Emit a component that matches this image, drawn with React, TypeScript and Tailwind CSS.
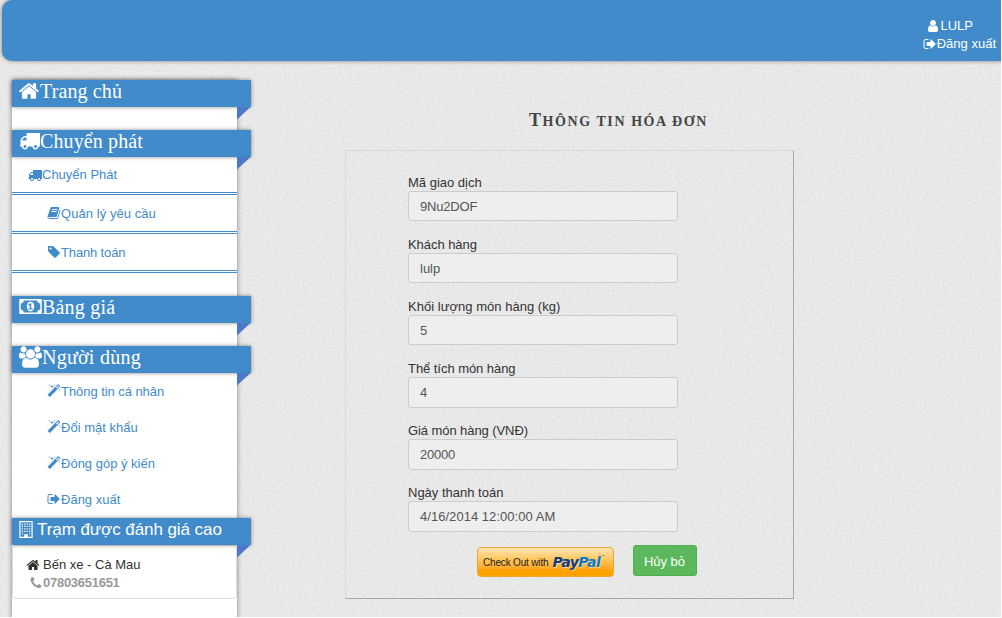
import React from 'react';

type IconProps = { d: string; w?: number; className?: string };

function Icon({ d, w = 1792, className = '' }: IconProps) {
  return (
    <svg viewBox={`0 0 ${w} 1792`} fill="currentColor" fillRule="evenodd" className={`shrink-0 ${className}`}>
      <path d={d} />
    </svg>
  );
}

const HOME =
  'M1472 992v480q0 26-19 45t-45 19h-384v-384h-256v384h-384q-26 0-45-19t-19-45v-480q0-1 .5-3t.5-3l575-474 575 474q1 2 1 6zm223-69l-62 74q-8 9-21 11h-3q-13 0-21-7l-692-577-692 577q-12 8-24 7-13-2-21-11l-62-74q-8-10-7-23.5t11-21.5l719-599q32-26 76-26t76 26l244 204v-195q0-14 9-23t23-9h192q14 0 23 9t9 23v408l219 182q10 8 11 21.5t-7 23.5z';
const TRUCK =
  'M640 1408q0-52-38-90t-90-38-90 38-38 90 38 90 90 38 90-38 38-90zm-384-512h384v-256h-158q-13 0-22 9l-195 195q-9 9-9 22v30zm1280 512q0-52-38-90t-90-38-90 38-38 90 38 90 90 38 90-38 38-90zm256-1088v1024q0 15-4 26.5t-13.5 18.5-16.5 11.5-23.5 6-22.5 2-25.5 0-22.5-.5q0 106-75 181t-181 75-181-75-75-181h-384q0 106-75 181t-181 75-181-75-75-181h-64q-3 0-22.5.5t-25.5 0-22.5-2-23.5-6-16.5-11.5-13.5-18.5-4-26.5q0-26 19-45t45-19v-320q0-8-.5-35t0-38 2.5-34.5 6.5-37 14-30.5 22.5-30l198-198q19-19 50.5-32t58.5-13h160v-192q0-26 19-45t45-19h1024q26 0 45 19t19 45z';
const TAG =
  'M576 448q0-53-37.5-90.5t-90.5-37.5-90.5 37.5-37.5 90.5 37.5 90.5 90.5 37.5 90.5-37.5 37.5-90.5zm1067 576q0 53-37 90l-491 492q-39 37-91 37-53 0-90-37l-715-716q-38-37-64.5-101t-26.5-117v-416q0-52 38-90t90-38h416q53 0 117 26.5t102 64.5l715 714q37 39 37 91z';
const BOOK =
  'M1703 478q40 57 18 129l-275 906q-19 64-76.5 107.5t-122.5 43.5h-923q-77 0-148.5-53.5t-99.5-131.5q-24-67-2-127 0-4 3-27t4-37q1-8-3-21.5t-3-19.5q2-11 8-21t16.5-23.5 16.5-23.5q23-38 45-91.5t30-91.5q3-10 .5-30t-.5-28q3-11 17-28t17-23q21-36 42-92t25-90q1-9-2.5-32t.5-28q4-13 22-30.5t22-22.5q19-26 42.5-84.5t27.5-96.5q1-8-3-25.5t-2-26.5q2-8 9-18t18-23 17-21q8-12 16.5-30.5t15-35 16-36 19.5-32 26.5-23.5 36-11.5 47.5 5.5l-1 3q38-9 51-9h761q74 0 114 56t18 130l-274 906q-36 119-71.5 153.5t-128.5 34.5h-869q-27 0-38 15-11 16-1 43 24 70 144 70h923q29 0 56-15.5t35-41.5l300-987q7-22 5-57 38 15 59 43zm-1064 2q-4 13 2 22.5t20 9.5h608q13 0 25.5-9.5t16.5-22.5l21-64q4-13-2-22.5t-20-9.5h-608q-13 0-25.5 9.5t-16.5 22.5zm-83 256q-4 13 2 22.5t20 9.5h608q13 0 25.5-9.5t16.5-22.5l21-64q4-13-2-22.5t-20-9.5h-608q-13 0-25.5 9.5t-16.5 22.5z';
const SIGN_OUT =
  'M704 1440q0 4 1 20t.5 26.5-3 23.5-10 19.5-20.5 6.5h-320q-119 0-203.5-84.5t-84.5-203.5v-704q0-119 84.5-203.5t203.5-84.5h320q13 0 22.5 9.5t9.5 22.5q0 4 1 20t.5 26.5-3 23.5-10 19.5-20.5 6.5h-320q-66 0-113 47t-47 113v704q0 66 47 113t113 47h312l11.5 1 11.5 3 8 5.5 7 9 2 13.5zm928-544q0 26-19 45l-544 544q-19 19-45 19t-45-19-19-45v-288h-448q-26 0-45-19t-19-45v-384q0-26 19-45t45-19h448v-288q0-26 19-45t45-19 45 19l544 544q19 19 19 45z';
const USER =
  'M1536 1399q0 109-62.5 187t-150.5 78h-854q-88 0-150.5-78t-62.5-187q0-85 8.5-160.5t31.5-152 58.5-131 94-89 134.5-34.5q131 128 313 128t313-128q76 0 134.5 34.5t94 89 58.5 131 31.5 152 8.5 160.5zm-256-887q0 159-112.5 271.5t-271.5 112.5-271.5-112.5-112.5-271.5 112.5-271.5 271.5-112.5 271.5 112.5 112.5 271.5z';
const PHONE =
  'M1600 1240q0 27-10 70.5t-21 68.5q-21 50-122 106-94 51-186 51-27 0-53-3.5t-57.5-12.5-47-14.5-55.5-20.5-49-18q-98-35-175-83-127-79-264-216t-216-264q-48-77-83-175-3-9-18-49t-20.5-55.5-14.5-47-12.5-57.5-3.5-53q0-92 51-186 56-101 106-122 25-11 68.5-21t70.5-10q14 0 21 3 18 6 53 76 11 19 30 54t35 63.5 31 53.5q3 4 17.5 25t21.5 35.5 7 28.5q0 20-28.5 50t-62 55-62 53-28.5 46q0 9 5 22.5t8.5 20.5 14 24 11.5 19q76 137 174 235t235 174q2 1 19 11.5t24 14 20.5 8.5 22.5 5q18 0 46-28.5t53-62 55-62 50-28.5q14 0 28.5 7t35.5 21.5 25 17.5q25 15 53.5 31t63.5 35 54 30q70 35 76 53 3 7 3 21z';
const MAGIC =
  'M1254 581l293-293-107-107-293 293zm447-293q0 27-18 45l-1286 1286q-18 18-45 18t-45-18l-198-198q-18-18-18-45t18-45l1286-1286q18-18 45-18t45 18l198 198q18 18 18 45zm-1351-190l98 30-98 30-30 98-30-98-98-30 98-30 30-98zm350 162l196 60-196 60-60 196-60-196-196-60 196-60 60-196zm930 478l98 30-98 30-30 98-30-98-98-30 98-30 30-98zm-640-640l98 30-98 30-30 98-30-98-98-30 98-30 30-98z';
const USERS =
  'M657 896q-162 5-265 128h-134q-82 0-138-40.5t-56-118.5q0-353 124-353 6 0 43.5 21t97.5 42.5 119 21.5q67 0 133-23-5 37-5 66 0 159 81 256zm1071 637q0 120-73 189.5t-194 69.5h-874q-121 0-194-69.5t-73-189.5q0-53 3.5-103.5t14-109 26.5-108.5 43-97.5 62-81 85.5-53.5 111.5-20q10 0 43 21.5t73 48 107 48 135 21.5 135-21.5 107-48 73-48 43-21.5q61 0 111.5 20t85.5 53.5 62 81 43 97.5 26.5 108.5 14 109 3.5 103.5zm-1024-1277q0 106-75 181t-181 75-181-75-75-181 75-181 181-75 181 75 75 181zm704 384q0 159-112.5 271.5t-271.5 112.5-271.5-112.5-112.5-271.5 112.5-271.5 271.5-112.5 271.5 112.5 112.5 271.5zm576 225q0 78-56 118.5t-138 40.5h-134q-103-123-265-128 81-97 81-256 0-29-5-66 66 23 133 23 59 0 119-21.5t97.5-42.5 43.5-21q124 0 124 353zm-128-609q0 106-75 181t-181 75-181-75-75-181 75-181 181-75 181 75 75 181z';
const MONEY =
  'M768 1152h384v-96h-128v-448h-114l-148 137 77 80q42-37 55-57h2v288h-128v96zm512-256q0 70-21 142t-59.5 134-101.5 101-138 39-138-39-101.5-101-59.5-134-21-142 21-142 59.5-134 101.5-101 138-39 138 39 101.5 101 59.5 134 21 142zm512 256v-512q-106 0-181-75t-75-181h-1152q0 106-75 181t-181 75v512q106 0 181 75t75 181h1152q0-106 75-181t181-75zm128-832v1152q0 26-19 45t-45 19h-1792q-26 0-45-19t-19-45v-1152q0-26 19-45t45-19h1792q26 0 45 19t19 45z';

const WINDOWS = [256, 512, 768, 1024].flatMap((y) =>
  [256, 512, 768, 1024].map((x) => `M${x} ${y}h128v128h-128z`),
);
const BUILDING = `M64 0h1280q64 0 64 64v1664q0 64-64 64H64q-64 0-64-64V64Q0 0 64 0zM128 128v1536h384v-256h384v256h384V128z${WINDOWS.join('')}M256 1280h128v128H256zM1024 1280h128v128h-128z`;

function Ribbon({ children, className = '' }: { children: React.ReactNode; className?: string }) {
  return (
    <h3
      className={`relative flex h-[27px] w-[239px] items-center bg-[#428bca] pl-[7px] text-white shadow-[0_0_4px_rgba(0,0,0,0.45)] ${className}`}
    >
      {children}
      <svg viewBox="0 0 14 13" className="absolute top-[27px] left-[225px] h-[13px] w-[14px]">
        <path d="M0 0H13.5L0 12.5z" fill="#4c77cb" />
      </svg>
    </h3>
  );
}

type SubItemProps = { icon: string; label: string; iconSize?: string; text?: string; className: string };

function SubItem({ icon, label, iconSize = '-ml-[0.7px] -mr-[0.3px] size-[14px]', text = '', className }: SubItemProps) {
  return (
    <li className={`flex items-center ${className}`}>
      <Icon d={icon} className={iconSize} />
      <span className={`pt-px ${text}`}>{label}</span>
    </li>
  );
}

const FIELDS = [
  { label: 'Mã giao dịch', value: '9Nu2DOF', text: '', box: 'h-[30px] tracking-[-0.2px]' },
  { label: 'Khách hàng', value: 'lulp', text: 'tracking-[-0.05px]', box: 'h-[30px]' },
  { label: 'Khối lượng món hàng (kg)', value: '5', text: 'tracking-[0.03px]', box: 'h-[30px]' },
  { label: 'Thể tích món hàng', value: '4', text: 'tracking-[-0.05px]', box: 'h-[31px]' },
  { label: 'Giá món hàng (VNĐ)', value: '20000', text: 'tracking-[-0.08px]', box: 'h-[31px] tracking-[-0.2px]' },
  { label: 'Ngày thanh toán', value: '4/16/2014 12:00:00 AM', text: '', box: 'h-[31px] tracking-[0.04px]' },
];

export default function App() {
  return (
    <div className="relative isolate flex h-[618px] w-[1002px] flex-col overflow-hidden border-r border-b border-white bg-[#e8e8e8] font-['Liberation_Sans',Arial,sans-serif] text-[13px] text-[#333]">
      <svg className="absolute inset-0 -z-10 h-full w-full">
        <filter id="paper" x="0" y="0" width="100%" height="100%" colorInterpolationFilters="sRGB">
          <feTurbulence type="fractalNoise" baseFrequency="0.4" numOctaves={3} seed={4} />
          <feColorMatrix values="0.065 0 0 0 0.877  0.065 0 0 0 0.877  0.065 0 0 0 0.877  0 0 0 0 1" />
        </filter>
        <rect width="100%" height="100%" filter="url(#paper)" />
      </svg>

      <header className="ml-[2px] flex h-[61px] shrink-0 flex-col items-end rounded-l-[10px] bg-[#428bca] pt-[17px] pr-[5px] text-white shadow-[0_0_4px_rgba(0,0,0,0.45)]">
        <a className="mr-[23px] flex h-[18px] items-center">
          <Icon d={USER} className="mb-px size-[14px]" />
          <span>LULP</span>
        </a>
        <a className="flex h-[18px] items-center">
          <Icon d={SIGN_OUT} className="-mr-[0.5px] mb-px size-[14px]" />
          <span>Đăng xuất</span>
        </a>
      </header>

      <div className="flex min-h-0 flex-1">
        <aside className="mt-[19px] ml-[12px] h-[560px] w-[225px] shrink-0 bg-white text-[#428bca] shadow-[0_0_5px_rgba(0,0,0,0.45)]">
          <Ribbon className="mb-[23px] font-['Liberation_Serif',serif] text-[20px] tracking-[0.12px]">
            <Icon d={HOME} className="-ml-[0.7px] -mr-[0.3px] mb-[6px] size-[22px]" />
            <span className="mb-[6px]">Trang chủ</span>
          </Ribbon>

          <Ribbon className="font-['Liberation_Serif',serif] text-[20px] tracking-[0.12px]">
            <Icon d={TRUCK} className="mb-[6px] size-[21px]" />
            <span className="mb-[6px]">Chuyển phát</span>
          </Ribbon>
          <ul className="mb-[23px]">
            <SubItem
              icon={TRUCK}
              label="Chuyển Phát"
              iconSize="size-[14px]"
              className="h-[38px] border-b-[3px] border-double border-[#428bca] pl-[16px]"
            />
            <SubItem
              icon={BOOK}
              label="Quản lý yêu cầu"
              text="tracking-[0.06px]"
              className="h-[39px] border-b-[3px] border-double border-[#428bca] pl-[36px]"
            />
            <SubItem
              icon={TAG}
              label="Thanh toán"
              text="tracking-[-0.15px]"
              className="h-[39px] border-b-[3px] border-double border-[#428bca] pl-[36px]"
            />
          </ul>

          <Ribbon className="mb-[23px] font-['Liberation_Serif',serif] text-[20px] tracking-[0.2px]">
            <Icon d={MONEY} w={1920} className="mb-[6px] h-[21px] w-[23px]" />
            <span className="mb-[6px]">Bảng giá</span>
          </Ribbon>

          <Ribbon className="font-['Liberation_Serif',serif] text-[20px] tracking-[0.25px]">
            <svg viewBox="64 0 1920 1792" fill="currentColor" className="mb-[5px] h-[22px] w-[23px] shrink-0">
              <path d={USERS} />
            </svg>
            <span className="mb-[6px]">Người dùng</span>
          </Ribbon>
          <ul className="pb-px">
            <SubItem icon={MAGIC} label="Thông tin cá nhân" text="tracking-[-0.06px]" className="h-[36px] pl-[36px]" />
            <SubItem icon={MAGIC} label="Đổi mật khẩu" className="h-[36px] pl-[36px]" />
            <SubItem icon={MAGIC} label="Đóng góp ý kiến" className="h-[36px] pl-[36px]" />
            <SubItem icon={SIGN_OUT} label="Đăng xuất" className="h-[36px] pl-[36px]" />
          </ul>

          <Ribbon className="text-[17px] tracking-[-0.07px]">
            <Icon d={BUILDING} w={1408} className="mb-[5px] h-[17px] w-[14px]" />
            <span className="mb-[4px] ml-[4px]">Trạm được đánh giá cao</span>
          </Ribbon>
          <div className="h-[54px] rounded-[4px] border border-[#ddd] bg-white pt-[10px] pl-[14px] text-[#333]">
            <div className="flex h-[18px] items-center gap-[3px]">
              <Icon d={HOME} className="-ml-[0.7px] -mr-[0.3px] size-[14px]" />
              <span>Bến xe - Cà Mau</span>
            </div>
            <div className="flex h-[18px] items-center pl-[2px] font-bold tracking-[-0.27px] text-[#999]">
              <Icon d={PHONE} className="size-[14px]" />
              <span>07803651651</span>
            </div>
          </div>
        </aside>

        <main className="ml-[108px] w-[449px] pt-[47px]">
          <h2 className="flex h-[24px] items-baseline pl-[184px] font-['Liberation_Serif',serif] text-[14px] leading-[24px] font-bold tracking-[1.57px] whitespace-nowrap text-[#444] uppercase">
            <span className="text-[18px]">T</span>
            <span>hông tin hóa đơn</span>
          </h2>
          <form className="mt-[18px] h-[449px] border border-t-[#d9d9d9] border-r-[#a9a9a9] border-b-[#a9a9a9] border-l-[#d9d9d9] pt-[22px] pl-[62px]">
            {FIELDS.map((f) => (
              <div key={f.label} className="mb-[13px] h-[49px]">
                <label className={`flex h-[18px] items-center pt-[2px] ${f.text}`}>{f.label}</label>
                <div
                  className={`flex w-[270px] items-center rounded-[3px] border border-[#ccc] bg-[#eee] pt-px pl-[11px] text-[#555] ${f.box}`}
                >
                  {f.value}
                </div>
              </div>
            ))}
            <div className="flex items-start pl-[69px]">
              <button
                type="button"
                className="mt-[2px] flex h-[30px] w-[137px] items-center rounded-[4px] border border-[#eda72f] bg-linear-to-b from-[#ffe6b3] via-[#ffc75c] via-40% to-[#ffa200] to-80% pl-[5px] whitespace-nowrap"
              >
                <span className="text-[10px] tracking-[-0.17px] text-[#222]">Check Out with</span>
                <span className="ml-[4px] flex items-start font-['DejaVu_Sans',sans-serif] text-[14px] leading-[16px] font-bold tracking-[-0.55px] text-[#0f3f7f] italic [text-shadow:1px_1px_0_rgba(255,255,255,0.45)]">
                  Pay<span className="text-[#0f7ac0]">Pal</span>
                  <span className="ml-[1px] text-[4px] leading-[6px] font-normal tracking-normal not-italic">™</span>
                </span>
              </button>
              <button
                type="button"
                className="ml-[19px] h-[31px] w-[64px] rounded-[3px] border border-[#4cae4c] bg-[#5cb85c] pt-[2px] pr-[1px] text-white"
              >
                Hủy bỏ
              </button>
            </div>
          </form>
        </main>
      </div>
    </div>
  );
}
